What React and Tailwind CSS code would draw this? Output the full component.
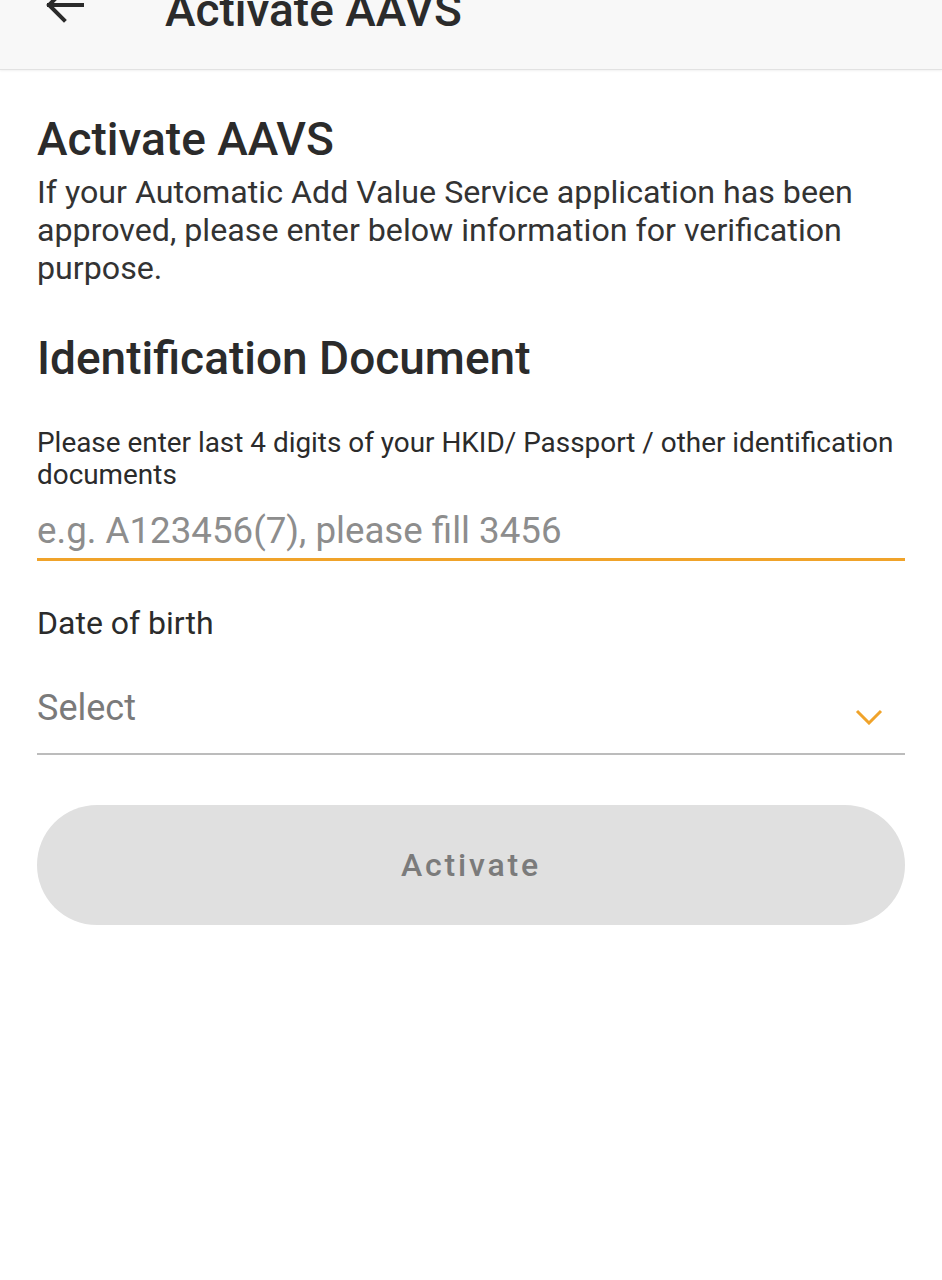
import React, { useState } from 'react'

const font = { fontFamily: 'Roboto, "Noto Sans", sans-serif' }

const App = () => {
    const [lastDigits, setLastDigits] = useState('');

    return (
        <div className="min-h-screen bg-white text-[#2b2b2b] font-['Roboto',sans-serif]" style={font}>
            {/* Top bar (scrolled, top part cut off) */}
            <div className="h-[70px] bg-[#f8f8f8] border-b border-[#e2e2e2] shadow-[0_1px_2px_rgba(0,0,0,0.06)] overflow-hidden">
                <div className="flex items-start -mt-[17px]">
                    <button className="ml-[44px] mt-[2px] w-[40px] h-[40px] text-[#2b2b2b]" aria-label="Back">
                        <svg viewBox="0 0 40 40" width="40" height="40" fill="none" stroke="currentColor" strokeWidth="4" strokeLinecap="square">
                            <path d="M38 20H5" />
                            <path d="M20 5L5 20L20 35" />
                        </svg>
                    </button>
                    <h1 className="ml-[81px] text-[46px] leading-[54px] font-medium text-[#2b2b2b]">Activate AAVS</h1>
                </div>
            </div>

            <div className="px-[37px]">
                {/* Intro */}
                <h2 className="mt-[42px] text-[46px] leading-[54px] font-medium">Activate AAVS</h2>
                <p className="mt-[7px] text-[32.2px] leading-[38px] text-[#333]">
                    If your Automatic Add Value Service application has been approved, please enter below information for verification purpose.
                </p>

                {/* Identification Document */}
                <h2 className="mt-[44px] text-[46px] leading-[54px] font-medium">Identification Document</h2>

                <label htmlFor="digits" className="block mt-[42px] text-[27.9px] leading-[32px] text-[#2b2b2b]">
                    Please enter last 4 digits of your HKID/ Passport / other identification documents
                </label>
                <input
                    id="digits"
                    value={lastDigits}
                    onChange={(e) => setLastDigits(e.target.value)}
                    placeholder="e.g. A123456(7), please fill 3456"
                    className="mt-[17px] block w-full h-[53px] pb-[6px] text-[36.7px] leading-[44px] text-[#2b2b2b] placeholder:text-[#8d8d8d] border-b-[3px] border-[#f0a32a] outline-none bg-transparent"
                />

                {/* Date of birth */}
                <p className="mt-[43px] text-[32px] leading-[38px] text-[#2b2b2b]">Date of birth</p>
                <div className="mt-[44px] h-[69px] flex items-start justify-between pr-[22px] border-b-2 border-[#bcbcbc]">
                    <span className="text-[36px] leading-[44px] text-[#7a7a7a]">Select</span>
                    <svg className="mt-[23px]" width="28" height="16" viewBox="0 0 28 16" fill="none" stroke="#f0a32a" strokeWidth="3">
                        <path d="M2 2L14 14L26 2" />
                    </svg>
                </div>

                {/* Submit */}
                <button
                    disabled
                    className="mt-[50px] w-full h-[120px] rounded-full bg-[#e0e0e0] text-[#7b7b7b] text-[32px] font-medium tracking-[2.8px]"
                >
                    Activate
                </button>
            </div>
        </div>
    )
}

export default App
